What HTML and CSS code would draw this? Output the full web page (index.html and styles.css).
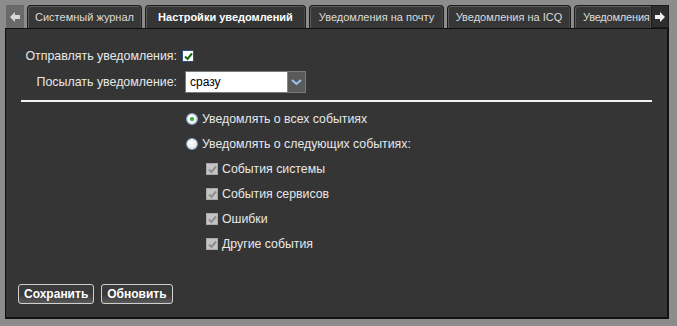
FILE: index.html
```html
<!DOCTYPE html>
<html lang="ru">
<head>
<meta charset="utf-8">
<title>Настройки уведомлений</title>
<link rel="stylesheet" href="styles.css">
</head>
<body>
<div class="page">
  <div class="tabbar">
    <div class="nav nav-left">
      <svg width="10" height="10" viewBox="0 0 10 10"><path d="M0 5 L5 0 L5 3 L10 3 L10 7 L5 7 L5 10 Z" fill="#d8d8d8"/></svg>
    </div>
    <div class="tabs">
      <div class="tab">Системный журнал</div>
      <div class="tab active">Настройки уведомлений</div>
      <div class="tab">Уведомления на почту</div>
      <div class="tab">Уведомления на ICQ</div>
      <div class="tab last">Уведомления</div>
    </div>
    <div class="nav nav-right">
      <svg width="10" height="10" viewBox="0 0 10 10"><path d="M10 5 L5 0 L5 3 L0 3 L0 7 L5 7 L5 10 Z" fill="#f0f0f0"/></svg>
    </div>
  </div>
  <div class="panel">
    <div class="form">
      <div class="row">
        <span class="label">Отправлять уведомления:</span>
        <span class="check on">
          <svg width="9" height="9" viewBox="0 0 9 9"><path d="M1 4.5 L3.5 7 L8 1.5" fill="none" stroke="#1a6a1a" stroke-width="2"/></svg>
        </span>
      </div>
      <div class="row row2">
        <span class="label">Посылать уведомление:</span>
        <div class="select">
          <span class="select-value">сразу</span>
          <span class="select-btn">
            <svg width="11" height="7" viewBox="0 0 11 7"><path d="M1 1 L5.5 5 L10 1" fill="none" stroke="#9cc4f0" stroke-width="2"/></svg>
          </span>
        </div>
      </div>
    </div>
    <div class="rule"></div>
    <div class="options">
      <div class="opt"><span class="radio on"></span>Уведомлять о всех событиях</div>
      <div class="opt"><span class="radio"></span>Уведомлять о следующих событиях:</div>
      <div class="subs">
        <div class="sub"><span class="check dis"><svg width="9" height="9" viewBox="0 0 9 9"><path d="M1 4.5 L3.5 7 L8 1.5" fill="none" stroke="#8e8e8e" stroke-width="2"/></svg></span>События системы</div>
        <div class="sub"><span class="check dis"><svg width="9" height="9" viewBox="0 0 9 9"><path d="M1 4.5 L3.5 7 L8 1.5" fill="none" stroke="#8e8e8e" stroke-width="2"/></svg></span>События сервисов</div>
        <div class="sub"><span class="check dis"><svg width="9" height="9" viewBox="0 0 9 9"><path d="M1 4.5 L3.5 7 L8 1.5" fill="none" stroke="#8e8e8e" stroke-width="2"/></svg></span>Ошибки</div>
        <div class="sub"><span class="check dis"><svg width="9" height="9" viewBox="0 0 9 9"><path d="M1 4.5 L3.5 7 L8 1.5" fill="none" stroke="#8e8e8e" stroke-width="2"/></svg></span>Другие события</div>
      </div>
    </div>
    <div class="buttons">
      <button class="btn">Сохранить</button>
      <button class="btn">Обновить</button>
    </div>
  </div>
</div>
</body>
</html>
```
FILE: styles.css
```css
* { box-sizing: border-box; }
html, body { margin: 0; padding: 0; }
body {
  background: #8c8c8c;
  font-family: "Liberation Sans", Arial, sans-serif;
  font-size: 12px;
  color: #e8e8e8;
  width: 677px;
  height: 326px;
  overflow: hidden;
}
.page { padding: 5px 0 0 5px; }
.tabbar {
  display: flex;
  align-items: flex-end;
  height: 23px;
  width: 664px;
}
.nav {
  width: 18px;
  height: 23px;
  display: flex;
  align-items: center;
  justify-content: center;
  flex: none;
}
.nav-left { background: #6a6a6a; margin-left: 1px; margin-right: 3px; }
.nav-right { background: #2e2e2e; border: 1px solid #1a1a1a; }
.tabs {
  display: flex;
  gap: 3px;
  flex: 1;
  min-width: 0;
  height: 23px;
}
.tab {
  flex: none;
  height: 23px;
  padding: 0 8px;
  display: flex;
  align-items: center;
  justify-content: center;
  background: #373737;
  border: 1px solid #1c1c1c;
  border-bottom: none;
  border-radius: 4px 4px 0 0;
  box-shadow: inset 1px 1px 0 #5c5c5c, inset -1px 0 0 #4a4a4a;
  color: #dcdcdc;
  font-size: 11px;
  white-space: nowrap;
}
.tab:nth-child(1) { width: 115px; }
.tab:nth-child(2) { width: 161px; }
.tab:nth-child(3) { width: 135px; }
.tab:nth-child(4) { width: 124px; }
.tab.last {
  flex: 1 1 auto;
  min-width: 0;
  justify-content: flex-start;
  padding: 0 0 0 8px;
  letter-spacing: -0.2px;
  border-right: none;
  border-radius: 4px 0 0 0;
}
.tab.active {
  font-weight: bold;
  color: #ffffff;
  background: #353535;
}
.panel {
  width: 664px;
  height: 291px;
  background: #353535;
  border: 1px solid #111;
  border-right: 2px solid #111;
  border-bottom: 2px solid #111;
  display: flex;
  flex-direction: column;
}
.form { padding-top: 20px; }
.row {
  display: flex;
  align-items: center;
  height: 14px;
}
.row2 { margin-top: 8px; height: 22px; }
.label {
  width: 176px;
  text-align: right;
  padding-right: 5px;
  color: #e8e8e8;
  font-size: 12.4px;
}
.check {
  width: 12px;
  height: 12px;
  display: inline-flex;
  align-items: center;
  justify-content: center;
  flex: none;
}
.check.on { background: #ffffff; border: 1px solid #2c4f8a; }
.check.dis { background: #c4c4c4; border: 1px solid #a8a8a8; margin-right: 4px; }
.select {
  display: flex;
  width: 121px;
  height: 22px;
  border: 1px solid #7a7a7a;
  background: #fff;
  margin-left: 3px;
}
.select-value {
  flex: 1;
  color: #000;
  font-size: 12px;
  padding-left: 4px;
  display: flex;
  align-items: center;
}
.select-btn {
  width: 18px;
  background: #5a5a5a;
  border-left: 1px solid #888;
  display: flex;
  align-items: center;
  justify-content: center;
}
.rule {
  margin: 7px 15px 0 15px;
  height: 2px;
  background: #f2f2f2;
}
.options { padding-left: 180px; padding-top: 10px; font-size: 12.3px; }
.opt {
  display: flex;
  align-items: center;
  height: 14px;
  margin-bottom: 11px;
}
.radio {
  width: 12px;
  height: 12px;
  border-radius: 50%;
  background: radial-gradient(circle at 40% 40%, #ffffff, #d8dde6);
  border: 1px solid #8aa0c0;
  margin-right: 4px;
  flex: none;
  display: inline-block;
  position: relative;
}
.radio.on::after {
  content: "";
  position: absolute;
  left: 3px; top: 3px;
  width: 4px; height: 4px;
  border-radius: 50%;
  background: #2bb02b;
}
.subs { padding-left: 20px; }
.sub {
  display: flex;
  align-items: center;
  height: 14px;
  margin-bottom: 11px;
}
.buttons {
  margin-top: auto;
  padding: 0 0 13px 12px;
  display: flex;
  gap: 7px;
}
.btn {
  font-family: "Liberation Sans", Arial, sans-serif;
  font-size: 12px;
  font-weight: bold;
  color: #fff;
  height: 20px;
  padding: 0 5px;
  border: 1px solid #cfcfcf;
  border-radius: 3px;
  background: linear-gradient(#3a3a3a 0%, #3a3a3a 55%, #5a5a5a 100%);
}
```
